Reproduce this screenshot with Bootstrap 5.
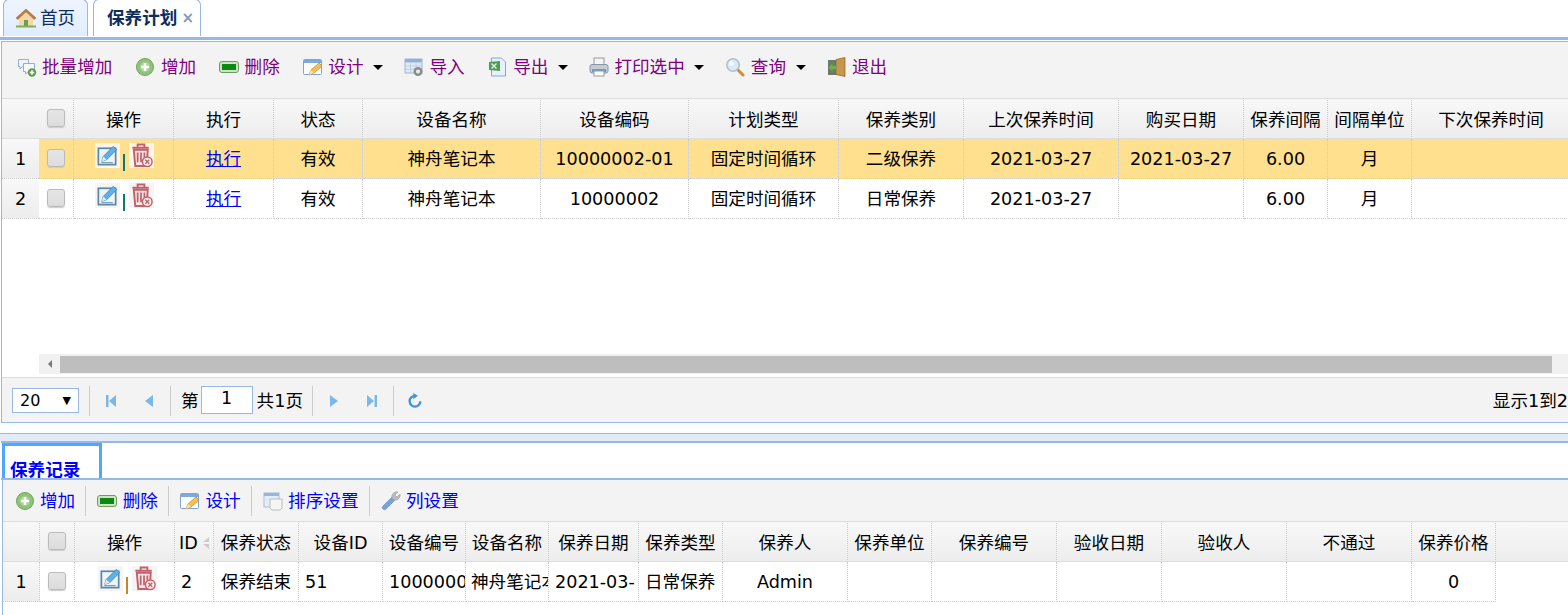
<!DOCTYPE html>
<html lang="zh"><head><meta charset="utf-8"><title>保养计划</title>
<link href="https://cdn.jsdelivr.net/npm/bootstrap@5.3.0/dist/css/bootstrap.min.css" rel="stylesheet">
<style>
html,body{height:615px;overflow:hidden;background:#fff;}
body{font-family:"DejaVu Sans","Noto Sans CJK SC",sans-serif;font-size:17.6px;color:#000;line-height:20px;}
.tabbar{height:37px;padding-left:3px;gap:5px;}
.tabitem{height:37px;margin-top:-1px;border:1px solid #95b8e7;border-bottom:0;border-top-left-radius:6px;border-top-right-radius:6px;background:linear-gradient(#eff5ff,#e0ecff);color:#0e2d5f;padding-top:8px;}
.tab-home{width:85px;padding-left:12px;gap:4px;}
.tab-on{width:108px;padding-left:13px;background:#fff;font-weight:700;gap:4px;}
.tab-x{font-weight:700;color:#7f99be;font-size:15px;}
.rule-a{height:3px;background:#95b8e7;}
.spacer1{height:1px;background:#fff;}
.top-panel{margin-left:1px;border-left:1px solid #95b8e7;border-top:1px solid #95b8e7;border-bottom:1px solid #95b8e7;height:382px;background:#fff;}
.bar-top{height:56px;background:#f3f3f3;padding:15px 0 0 14.5px;}
.tool{display:flex;align-items:flex-start;gap:5.5px;white-space:nowrap;text-decoration:none;height:20px;}
.tool svg{flex:none;}
.purple{color:#800080;}
.blue{color:#00f;}
.bar-top .tool{margin-right:23px;}
.bar-top .tool.has-caret{margin-right:21px;}
.caret-dn{width:0;height:0;border-left:5px solid transparent;border-right:5px solid transparent;border-top:5px solid #000;margin:8px 0 0 4px;}
.gridwrap{height:256px;overflow:hidden;}
.gridwrap-b{height:94px;overflow:hidden;}
table.grid{table-layout:fixed;border-collapse:separate;border-spacing:0;margin:0;}
.grid-a{width:1569px;}
.grid-b{width:1568px;}
.grid th,.grid td{padding:0;text-align:center;vertical-align:middle;font-weight:400;white-space:nowrap;overflow:hidden;height:40px;border-right:1px dotted #ccc;border-bottom:1px dotted #ccc;}
.grid thead th{height:41px;padding-top:2px;background:linear-gradient(#f8f8f8,#ededed);border-bottom:1px solid #ddd;border-top:1px solid #ddd;}
.grid th.rn-head{border-right:0;}
.grid-b th.rn-head{border-right:1px dotted #ccc;}
.grid td.rn{background:linear-gradient(#f8f8f8,#ededed);border-right:0;}
.grid-b td.rn{border-right:1px dotted #ccc;}
.grid tr.picked td:not(.rn){background:#ffe08f;}
.grid td.lft{text-align:left;padding-left:6px;}
.grid td.lft-t{padding-left:5px;}
.grid thead th.fill{border-right:0;}
.grid td.fill{border:0;}
.chk{display:block;margin:-2px auto 0;width:18px;height:18px;border:1px solid #bbb;border-radius:3px;background:linear-gradient(#e6e6e6,#dcdcdc);box-shadow:0 1px 1px #ccc;}
thead .chk{margin-top:-4px;}
.ops{display:flex;justify-content:center;align-items:flex-start;margin-top:-4px;padding-left:2px;}
.grid-b .ops{padding-left:5px;}
.ops svg{background:#f5f5f5;width:25px;height:25px;}
.picked .ops svg{background:#fff7e6;}
.pipe{width:2px;height:17px;background:#0a7a70;margin:11px 4px 0 3px;}
.pipe-o{background:#c9861a;}
.exec{color:#00f;text-decoration:underline;}
.hscroll{height:20px;margin-left:37px;background:#f1f1f1;display:flex;align-items:center;}
.sarrow{width:21px;height:20px;flex:none;display:flex;align-items:center;justify-content:center;}
.sarrow i{width:0;height:0;border-top:4px solid transparent;border-bottom:4px solid transparent;border-right:4px solid #777;}
.sthumb{width:1492px;height:17px;background:#bebebe;}
.pager{height:46px;margin-top:3px;background:#f3f3f3;border-top:1px solid #ddd;padding-left:10px;}
.selbox{width:67px;height:25px;border:1px solid #95b8e7;background:#fff;padding:0 7px;font-size:16px;line-height:23px;justify-content:space-between;}
.selbox span:last-child{font-size:11px;}
.vsep{width:1px;height:30px;background:#ccc;flex:none;margin-left:2px;}
.vsep.first{margin-left:10px;}
.vsep.mid{margin-left:9px;}
.pginput{width:52px;height:28px;border:1px solid #95b8e7;background:#fff;text-align:center;line-height:22px;margin:0 4px 2px 2px;flex:none;}
.pg-lead{margin-left:10px;}
.pg-info{margin-left:auto;white-space:nowrap;}
.pgbtn{width:38px;display:flex;justify-content:center;flex:none;}
.pgbtn.lead{margin-left:2px;}
.split{margin-top:10px;height:8px;background:#e2ecf8;border-top:1px solid #95b8e7;}
.rule-b{height:2px;background:#95b8e7;margin-left:1px;}
.tabs-b{height:35px;background:#fff;padding-left:2px;}
.rec-tab{width:100px;height:35px;border:3px solid #4da6ff;border-bottom:0;color:#00f;font-weight:700;padding:14px 0 0 5px;line-height:20px;overflow:hidden;}
.rule-c{height:2px;background:#95b8e7;margin-left:1px;}
.bot-panel{margin-left:2px;border-left:1px solid #95b8e7;}
.bar-bot{height:41px;background:#f3f3f3;padding-left:11.5px;}
.bar-bot .tool{height:20px;align-items:center;}
.bsep{width:1px;height:30px;background:#ccc;margin:0 11px 0 10px;flex:none;}
.idsort{margin-left:3px;vertical-align:-1px;}
</style></head><body>
<svg width="0" height="0" class="d-block position-absolute">
<defs>
<symbol id="i-plus" viewBox="0 0 20 20"><circle cx="10" cy="10" r="8.500" fill="#8fc27a" stroke="#6fa85a"/><circle cx="10" cy="10" r="5" fill="#a9d696"/><path d="M10 6v8M6 10h8" stroke="#fff" stroke-width="2.600"/></symbol>
<symbol id="i-minus" viewBox="0 0 20 20"><rect x=".5" y="4.500" width="19" height="11" rx="2.500" fill="#cfe3c4" stroke="#6d9b62"/><rect x="3" y="7" width="14" height="6" fill="#0a8a12"/></symbol>
<symbol id="i-multi" viewBox="0 0 20 20"><path d="M1.500 2.500h10v7h-6l-2.500 2.500v-2.500h-1.500z" fill="#eef4fb" stroke="#8fb0cf"/><path d="M6.500 6.500h11v8h-6l-3 2.500v-2.500h-2z" fill="#f4f8fc" stroke="#8fb0cf"/><circle cx="15" cy="15.500" r="4.200" fill="#5fa14a"/><path d="M15 13.300v4.400M12.800 15.500h4.400" stroke="#fff" stroke-width="1.500"/></symbol>
<symbol id="i-design" viewBox="0 0 20 20"><rect x=".5" y="2.500" width="18" height="15" rx="1" fill="#fff" stroke="#7fa4d4"/><rect x="1" y="3" width="17" height="3" fill="#7fa9dc"/><path d="M6 18l2-5 8-7 3 3-8 7z" fill="#f2c14e" stroke="#c98a2a" stroke-width=".8"/><path d="M6 18l2-5 3 3z" fill="#f6e2b8"/></symbol>
<symbol id="i-import" viewBox="0 0 20 20"><rect x="1" y="2" width="17" height="14" fill="#dfe9f6" stroke="#9db8d8"/><path d="M1 5.500h17M1 9h17M1 12.500h17M6.500 5.500v10M12 5.500v10" stroke="#b6cbe3" stroke-width=".8"/><rect x="1" y="2" width="17" height="3" fill="#8fb0da"/><circle cx="14" cy="14.500" r="4.500" fill="#8d8d8d"/><circle cx="14" cy="14.500" r="2" fill="#eee"/></symbol>
<symbol id="i-excel" viewBox="0 0 20 20"><path d="M3.500 1h10l4 4v14h-14z" fill="#e8f1fb" stroke="#7fa9d4"/><path d="M1 5l11-1v10l-11-1z" fill="#4f9a55"/><path d="M3.500 6.500l5 5M8.500 6.500l-5 5" stroke="#dfeedd" stroke-width="1.500"/></symbol>
<symbol id="i-print" viewBox="0 0 20 20"><rect x="5" y="1" width="10" height="7" fill="#f5f5f5" stroke="#999"/><rect x="1" y="7.500" width="18" height="8.500" rx="2" fill="#c4cbd3" stroke="#8d96a1"/><rect x="3" y="12" width="14" height="3" fill="#5aa0e0"/><rect x="5" y="14" width="10" height="5" fill="#fff" stroke="#999"/></symbol>
<symbol id="i-search" viewBox="0 0 20 20"><path d="M12 12l6 6" stroke="#d18c3a" stroke-width="3" stroke-linecap="round"/><circle cx="8" cy="8" r="6.200" fill="#d6eafb" stroke="#b9bfc6" stroke-width="1.600"/><circle cx="6.500" cy="6.500" r="2.500" fill="#f5fbff"/></symbol>
<symbol id="i-exit" viewBox="0 0 20 20"><rect x="1" y="3" width="10" height="15" fill="#6d7a68"/><path d="M9 2.500l9-2v19l-9-2z" fill="#c8954f" stroke="#8d6328" stroke-width=".7"/><path d="M1.500 10.500l4-4v2.200h4v3.600h-4v2.200z" fill="#67b04f"/></symbol>
<symbol id="i-home" viewBox="0 0 20 20"><path d="M0 10L10 1l10 9-2 1.500L10 4l-8 7.500z" fill="#c07a3a" stroke="#a4622a" stroke-width=".5"/><path d="M3 11l7-6.500 7 6.500v7H3z" fill="#f2d9a6"/><rect x="8" y="12" width="4" height="6" fill="#6b9d57"/><path d="M0 18.500h20" stroke="#7fae62" stroke-width="2"/></symbol>
<symbol id="i-edit" viewBox="0 0 26 26"><rect x="3.500" y="5.500" width="18" height="17" fill="#eef5fa" stroke="#5d87a8" stroke-width="1.800"/><path d="M7 19l1.500-5L19 3.500l3.500 3.500L12 17.500z" fill="#5fb0e6" stroke="#3c84b8" stroke-width=".8"/><path d="M7 19l1.500-5 3.500 3.500z" fill="#e8eef2"/><path d="M6.500 20.500h12" stroke="#5d87a8"/></symbol>
<symbol id="i-trash" viewBox="0 0 26 26"><path d="M3.500 5h17M9 4.500V1.500h7v3" fill="none" stroke="#c4606a" stroke-width="2"/><path d="M5 7h14.500l-1 17h-12z" fill="#f7e6e6" stroke="#c4606a" stroke-width="2"/><path d="M9 10v10M12.500 10v10M16 10v5" stroke="#c4606a" stroke-width="1.800"/><circle cx="19" cy="19.500" r="5" fill="#fbeeee" stroke="#c4606a" stroke-width="1.500"/><path d="M17 17.500l4 4M21 17.500l-4 4" stroke="#c4606a" stroke-width="1.400"/></symbol>
<symbol id="i-sort" viewBox="0 0 20 20"><rect x="1" y="2" width="15" height="14" fill="#e4edf7" stroke="#a9bfda"/><rect x="1" y="2" width="15" height="3" fill="#97b6dc"/><path d="M7 8h12v9l-2 2H9l-2-2z" fill="#f5f5f5" stroke="#bbb"/></symbol>
<symbol id="i-wrench" viewBox="0 0 20 20"><path d="M2 15L11 6l3 3-9 9a2 2 0 0 1-3-3z" fill="#7ba2d8" stroke="#6289c0" stroke-width=".6"/><path d="M11 7a5 5 0 0 1 6-6l-3 3 2 2 3-3a5 5 0 0 1-6 6z" fill="#bcbcbc" stroke="#9a9a9a" stroke-width=".6"/></symbol>
</defs></svg>

<div class="tabbar d-flex">
  <div class="tabitem tab-home d-flex"><svg width="20" height="20"><use href="#i-home"/></svg><span>首页</span></div>
  <div class="tabitem tab-on d-flex"><span>保养计划</span><span class="tab-x">×</span></div>
</div>
<div class="rule-a"></div>
<div class="spacer1"></div>

<div class="top-panel overflow-hidden">
  <div class="bar-top d-flex">
    <a class="tool purple"><svg width="20" height="20"><use href="#i-multi"/></svg>批量增加</a>
    <a class="tool purple"><svg width="20" height="20"><use href="#i-plus"/></svg>增加</a>
    <a class="tool purple"><svg width="20" height="20"><use href="#i-minus"/></svg>删除</a>
    <a class="tool purple has-caret"><svg width="20" height="20"><use href="#i-design"/></svg>设计<span class="caret-dn"></span></a>
    <a class="tool purple"><svg width="20" height="20"><use href="#i-import"/></svg>导入</a>
    <a class="tool purple has-caret"><svg width="20" height="20"><use href="#i-excel"/></svg>导出<span class="caret-dn"></span></a>
    <a class="tool purple has-caret"><svg width="20" height="20"><use href="#i-print"/></svg>打印选中<span class="caret-dn"></span></a>
    <a class="tool purple has-caret"><svg width="20" height="20"><use href="#i-search"/></svg>查询<span class="caret-dn"></span></a>
    <a class="tool purple"><svg width="20" height="20"><use href="#i-exit"/></svg>退出</a>
  </div>
  <div class="gridwrap">
    <table class="grid grid-a">
      <colgroup><col width="37"><col width="35"><col width="100"><col width="100"><col width="89"><col width="178"><col width="148"><col width="150"><col width="125"><col width="155"><col width="125"><col width="84"><col width="84"><col width="159"></colgroup>
      <thead><tr><th class="rn-head"></th><th><span class="chk"></span></th><th>操作</th><th>执行</th><th>状态</th><th>设备名称</th><th>设备编码</th><th>计划类型</th><th>保养类别</th><th>上次保养时间</th><th>购买日期</th><th>保养间隔</th><th>间隔单位</th><th>下次保养时间</th></tr></thead>
      <tbody>
        <tr class="picked"><td class="rn">1</td><td><span class="chk"></span></td><td><div class="ops"><svg width="26" height="26"><use href="#i-edit"/></svg><span class="pipe"></span><svg width="26" height="26"><use href="#i-trash"/></svg></div></td><td><span class="exec">执行</span></td><td>有效</td><td>神舟笔记本</td><td>10000002-01</td><td>固定时间循环</td><td>二级保养</td><td>2021-03-27</td><td>2021-03-27</td><td>6.00</td><td>月</td><td></td></tr>
        <tr><td class="rn">2</td><td><span class="chk"></span></td><td><div class="ops"><svg width="26" height="26"><use href="#i-edit"/></svg><span class="pipe"></span><svg width="26" height="26"><use href="#i-trash"/></svg></div></td><td><span class="exec">执行</span></td><td>有效</td><td>神舟笔记本</td><td>10000002</td><td>固定时间循环</td><td>日常保养</td><td>2021-03-27</td><td></td><td>6.00</td><td>月</td><td></td></tr>
      </tbody>
    </table>
  </div>
  <div class="hscroll"><span class="sarrow"><i></i></span><span class="sthumb"></span></div>
  <div class="pager d-flex align-items-center">
    <div class="selbox d-flex"><span>20</span><span>▼</span></div>
    <span class="vsep first"></span>
    <span class="pgbtn lead"><svg width="14" height="14" viewBox="0 0 14 14"><path d="M2 1h2.500v12H2zM12 1v12L5 7z" fill="#7ab8ea"/></svg></span>
    <span class="pgbtn"><svg width="14" height="14" viewBox="0 0 14 14"><path d="M11 1v12L3 7z" fill="#7ab8ea"/></svg></span>
    <span class="vsep"></span>
    <span class="pg-lead">第</span><span class="pginput">1</span><span>共1页</span>
    <span class="vsep mid"></span>
    <span class="pgbtn lead"><svg width="14" height="14" viewBox="0 0 14 14"><path d="M3 1v12l8-6z" fill="#7ab8ea"/></svg></span>
    <span class="pgbtn"><svg width="14" height="14" viewBox="0 0 14 14"><path d="M2 1v12l7-6zM9.500 1H12v12H9.500z" fill="#7ab8ea"/></svg></span>
    <span class="vsep"></span>
    <span class="pgbtn lead"><svg width="16" height="16" viewBox="0 0 14 14"><path d="M7 2.500a4.700 4.700 0 1 0 4.700 4.700" fill="none" stroke="#3d94d6" stroke-width="2"/><path d="M5.500 0v5.500L9.500 2.500z" fill="#3d94d6"/></svg></span>
    <span class="pg-info">显示1到2</span>
  </div>
</div>

<div class="split"></div>
<div class="rule-b"></div>
<div class="tabs-b"><div class="rec-tab">保养记录</div></div>
<div class="rule-c"></div>
<div class="bot-panel">
  <div class="bar-bot d-flex align-items-center">
    <a class="tool blue"><svg width="20" height="20"><use href="#i-plus"/></svg>增加</a><span class="bsep"></span>
    <a class="tool blue"><svg width="20" height="20"><use href="#i-minus"/></svg>删除</a><span class="bsep"></span>
    <a class="tool blue"><svg width="20" height="20"><use href="#i-design"/></svg>设计</a><span class="bsep"></span>
    <a class="tool blue"><svg width="20" height="20"><use href="#i-sort"/></svg>排序设置</a><span class="bsep"></span>
    <a class="tool blue"><svg width="20" height="20"><use href="#i-wrench"/></svg>列设置</a>
  </div>
  <div class="gridwrap-b">
    <table class="grid grid-b">
      <colgroup><col width="37"><col width="35"><col width="100"><col width="39"><col width="85"><col width="84"><col width="83"><col width="83"><col width="90"><col width="84"><col width="125"><col width="84"><col width="125"><col width="105"><col width="125"><col width="125"><col width="84"><col width="75"></colgroup>
      <thead><tr><th class="rn-head"></th><th><span class="chk"></span></th><th>操作</th><th class="text-start ps-1">ID<svg class="idsort" width="9" height="14" viewBox="0 0 9 14"><path d="M8 1v5L2 6zM8 8v5L2 8z" fill="#ccc"/></svg></th><th>保养状态</th><th>设备ID</th><th>设备编号</th><th>设备名称</th><th>保养日期</th><th>保养类型</th><th>保养人</th><th>保养单位</th><th>保养编号</th><th>验收日期</th><th>验收人</th><th>不通过</th><th>保养价格</th><th class="fill"></th></tr></thead>
      <tbody><tr><td class="rn">1</td><td><span class="chk"></span></td><td><div class="ops"><svg width="26" height="26"><use href="#i-edit"/></svg><span class="pipe pipe-o"></span><svg width="26" height="26"><use href="#i-trash"/></svg></div></td><td class="lft">2</td><td>保养结束</td><td class="lft">51</td><td class="lft">1000000</td><td class="lft lft-t">神舟笔记本</td><td class="lft">2021-03-</td><td class="lft">日常保养</td><td>Admin</td><td></td><td></td><td></td><td></td><td></td><td>0</td><td class="fill"></td></tr></tbody>
    </table>
  </div>
</div>
</body></html>
